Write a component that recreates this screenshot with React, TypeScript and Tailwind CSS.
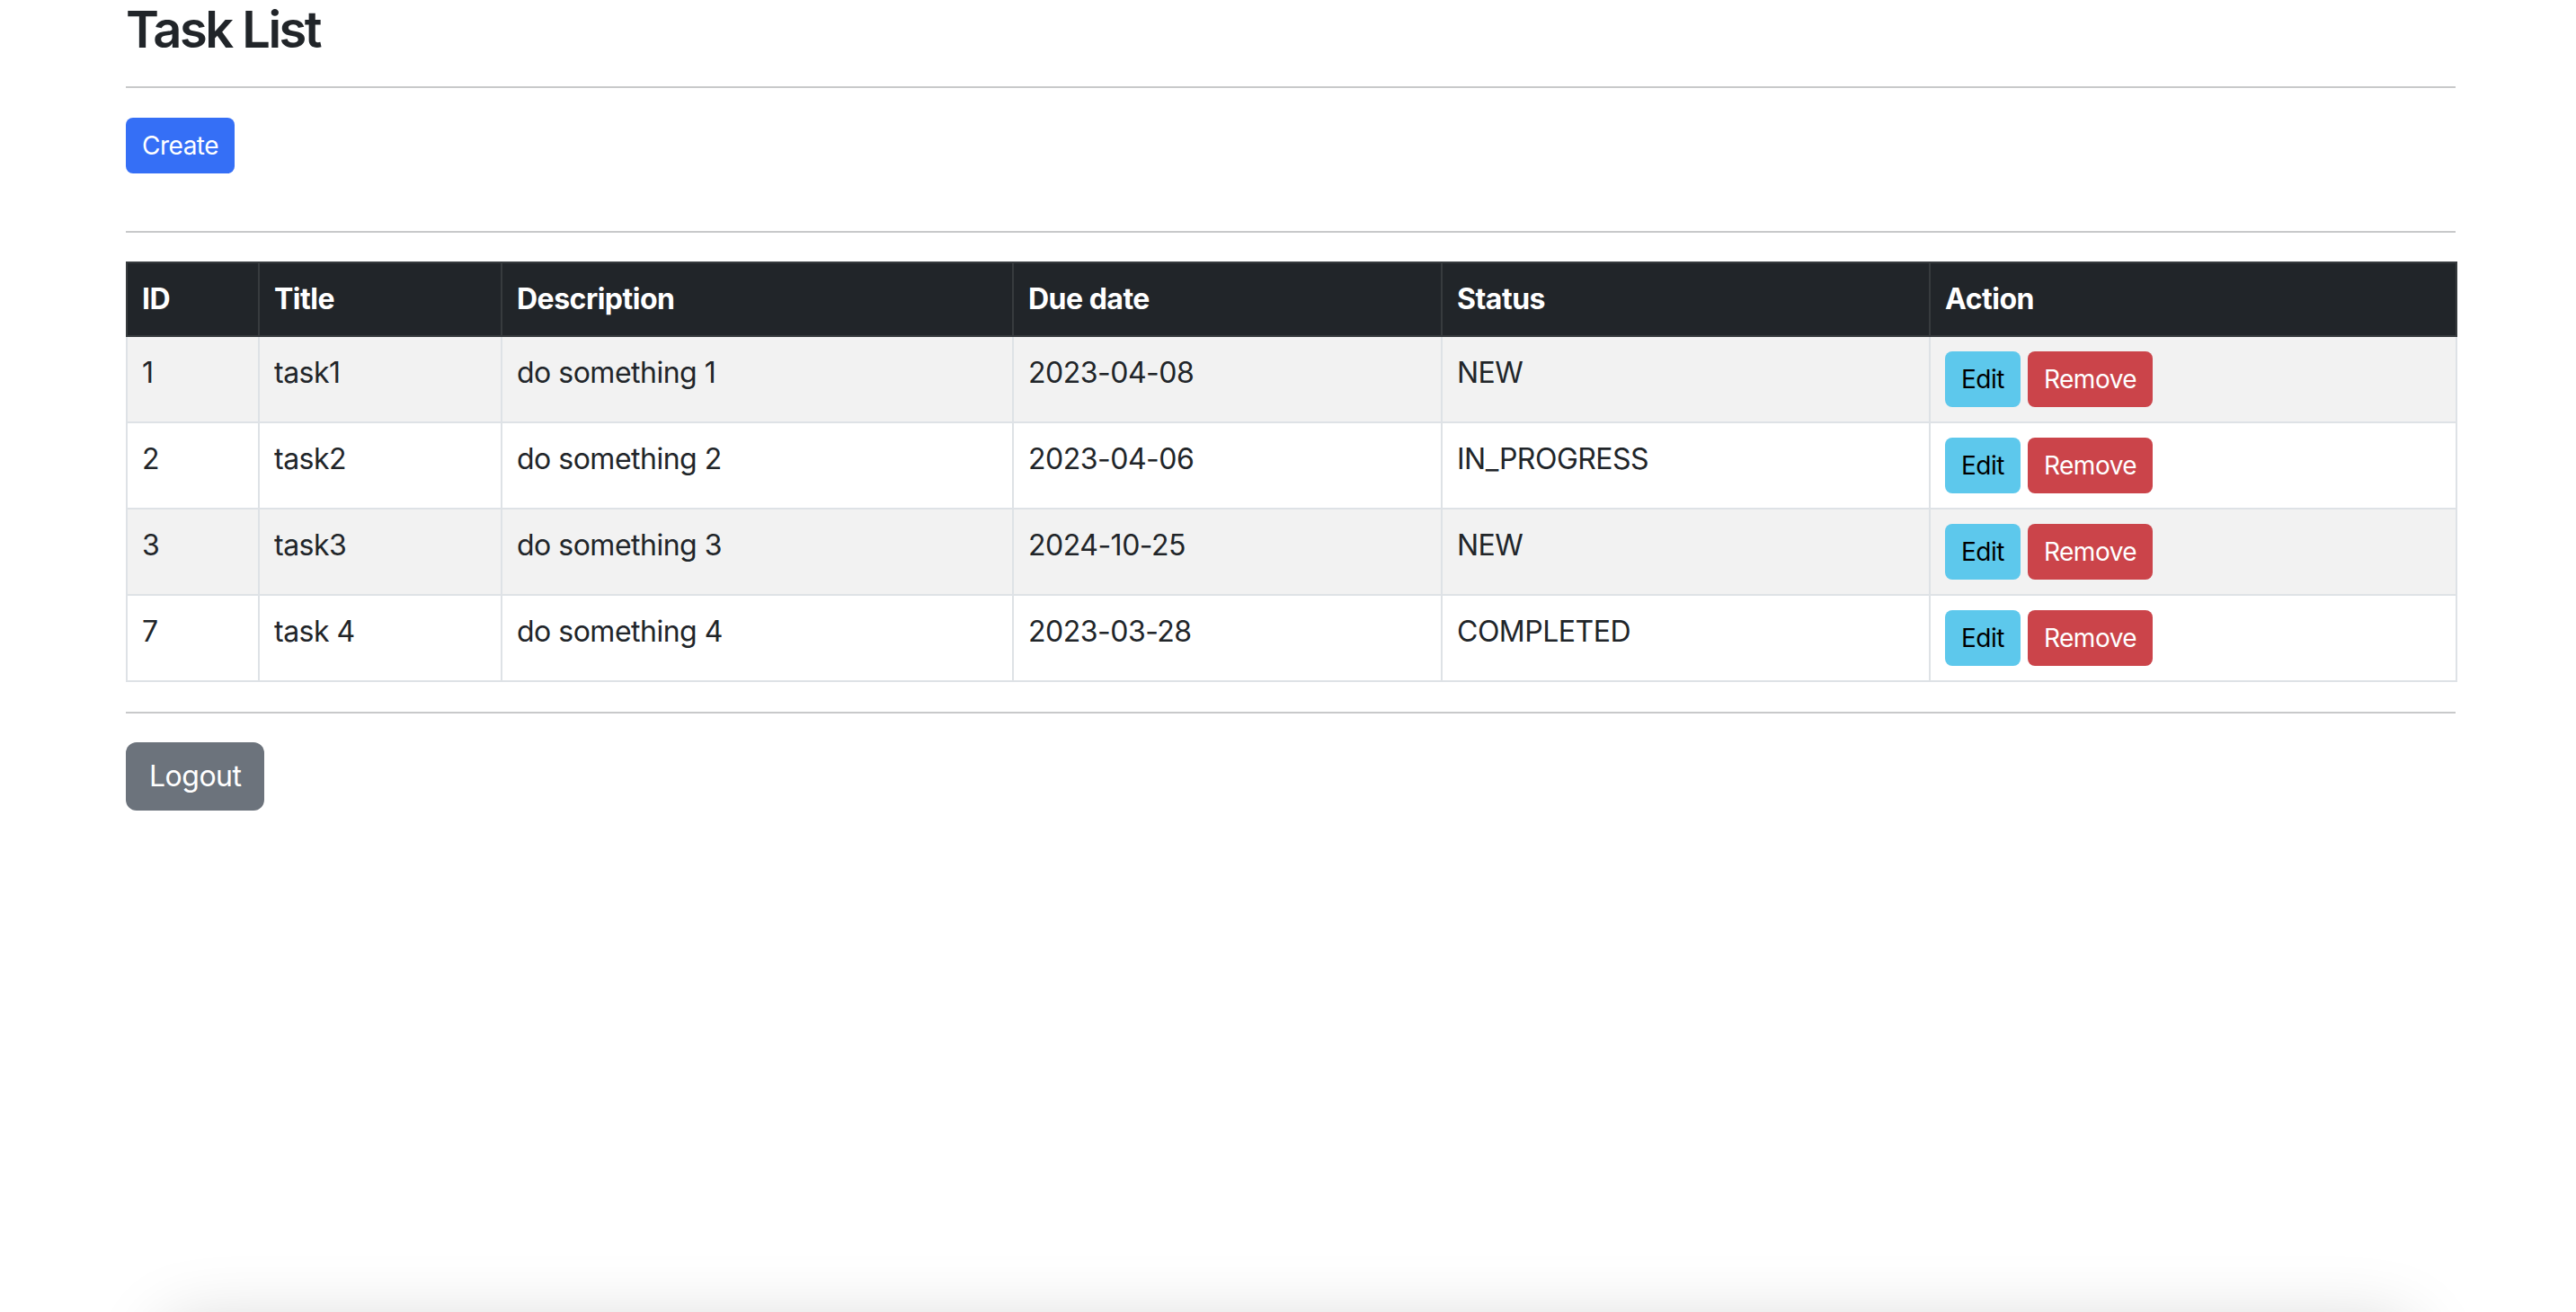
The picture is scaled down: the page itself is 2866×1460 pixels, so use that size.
import React from 'react';

interface Task {
  id: number;
  title: string;
  description: string;
  dueDate: string;
  status: string;
}

const tasks: Task[] = [
  { id: 1, title: 'task1', description: 'do something 1', dueDate: '2023-04-08', status: 'NEW' },
  { id: 2, title: 'task2', description: 'do something 2', dueDate: '2023-04-06', status: 'IN_PROGRESS' },
  { id: 3, title: 'task3', description: 'do something 3', dueDate: '2024-10-25', status: 'NEW' },
  { id: 7, title: 'task 4', description: 'do something 4', dueDate: '2023-03-28', status: 'COMPLETED' },
];

const headers = ['ID', 'Title', 'Description', 'Due date', 'Status', 'Action'];
const widths = ['w-[147px]', 'w-[270px]', 'w-[569px]', 'w-[477px]', 'w-[543px]', 'w-[586px]'];

export default function App() {
  return (
    <div className="min-h-screen bg-white font-['Inter','Noto_Sans',sans-serif] text-[#212529] tracking-[-0.5px]">
      <div className="ml-[140px] w-[2592px]">
        <h3 className="text-[56px] leading-[67px] font-semibold tracking-[-2.5px]">Task List</h3>
        <hr className="mt-[29px] border-t-2 border-[#c8c9ca]" />

        <button className="mt-[33px] h-[62px] px-[18px] rounded-[8px] bg-[#356ff6] text-white text-[28px] leading-[42px]">
          Create
        </button>

        <hr className="mt-[64px] border-t-2 border-[#c8c9ca]" />

        <table className="mt-[32px] w-full table-fixed border-collapse text-[32px] leading-[48px]">
          <colgroup>
            {widths.map((w, i) => (
              <col key={i} className={w} />
            ))}
          </colgroup>
          <thead className="bg-[#212529] text-white">
            <tr>
              {headers.map((h) => (
                <th
                  key={h}
                  className="border-2 border-[#373b3e] p-[16px] text-left align-top font-bold"
                >
                  {h}
                </th>
              ))}
            </tr>
          </thead>
          <tbody>
            {tasks.map((t, i) => (
              <tr key={t.id} className={i % 2 === 0 ? 'bg-[#f2f2f2]' : 'bg-white'}>
                <td className="border-2 border-[#dee2e6] p-[16px] align-top">{t.id}</td>
                <td className="border-2 border-[#dee2e6] p-[16px] align-top">{t.title}</td>
                <td className="border-2 border-[#dee2e6] p-[16px] align-top">{t.description}</td>
                <td className="border-2 border-[#dee2e6] p-[16px] align-top">{t.dueDate}</td>
                <td className="border-2 border-[#dee2e6] p-[16px] align-top">{t.status}</td>
                <td className="border-2 border-[#dee2e6] p-[16px] align-top">
                  <div className="flex gap-[8px]">
                    <button className="h-[62px] px-[18px] rounded-[8px] bg-[#5dc8ec] text-black text-[28px] leading-[42px]">
                      Edit
                    </button>
                    <button className="h-[62px] px-[18px] rounded-[8px] bg-[#cb444a] text-white text-[28px] leading-[42px]">
                      Remove
                    </button>
                  </div>
                </td>
              </tr>
            ))}
          </tbody>
        </table>

        <hr className="mt-[33px] border-t-2 border-[#c8c9ca]" />

        <button className="mt-[32px] h-[76px] px-[26px] rounded-[12px] bg-[#6c737c] text-white text-[32px] leading-[48px]">
          Logout
        </button>
      </div>

      {/* shadow of a panel sitting just below the viewport */}
      <div className="fixed left-1/2 top-[1475px] h-[200px] w-[2500px] -translate-x-1/2 rounded-[24px] bg-white shadow-[0_0_80px_rgba(0,0,0,0.18)]" />
    </div>
  );
}
